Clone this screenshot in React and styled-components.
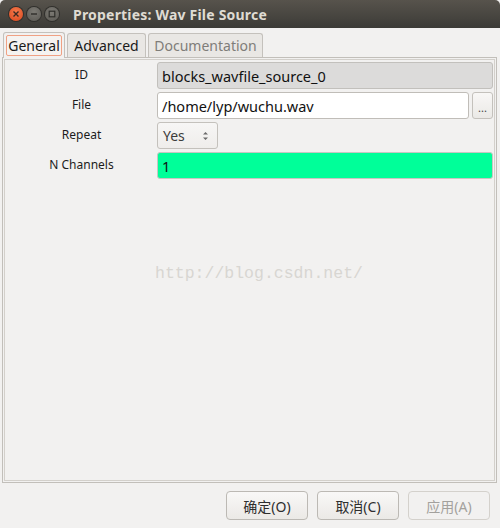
import React from "react";
import styled, { createGlobalStyle } from "styled-components";

const Global = createGlobalStyle`
  html, body { margin: 0; padding: 0; background: #f2f1f0; }
  body { font-family: "Noto Sans", "DejaVu Sans", sans-serif; }
`;

const Window = styled.div`
  width: 500px;
  height: 528px;
  background: #f2f1f0;
  display: flex;
  flex-direction: column;
  position: relative;
  overflow: hidden;
`;

const TitleBar = styled.div`
  height: 28px;
  flex: 0 0 28px;
  background: linear-gradient(#57534c, #3c3b37);
  border-radius: 5px 5px 0 0;
  display: flex;
  align-items: center;
  padding-left: 9px;
  box-sizing: border-box;
`;

const WinBtn = styled.span`
  width: 14px;
  height: 14px;
  border-radius: 50%;
  margin-right: ${(p) => p.$mr}px;
  background: ${(p) => (p.$close ? "radial-gradient(circle at 50% 35%, #f47a4c, #d9461c)" : "radial-gradient(circle at 50% 35%, #7c7a74, #5a5853)")};
  box-shadow: 0 0 0 1px #302f2c;
  display: flex;
  align-items: center;
  justify-content: center;
`;

const Title = styled.div`
  margin-left: 14px;
  color: #dfdbd2;
  font-weight: bold;
  font-size: 14px;
  letter-spacing: 0.2px;
`;

const Body = styled.div`
  flex: 1;
  display: flex;
  flex-direction: column;
  padding: 4px 3px 0 2px;
`;

const Tabs = styled.div`
  display: flex;
  align-items: flex-end;
  height: 25px;
  padding-left: 1px;
`;

const Tab = styled.div`
  box-sizing: border-box;
  height: ${(p) => (p.$active ? 26 : 24)}px;
  width: ${(p) => p.$w}px;
  margin-right: 2px;
  border: 1px solid #c4c1bc;
  border-bottom: none;
  border-radius: 3px 3px 0 0;
  background: ${(p) => (p.$active ? "#f2f1f0" : "#e9e7e4")};
  display: flex;
  align-items: center;
  justify-content: center;
  padding: 2px;
  margin-bottom: ${(p) => (p.$active ? -1 : 0)}px;
  position: relative;
  z-index: ${(p) => (p.$active ? 1 : 0)};
`;

const TabLabel = styled.span`
  font-size: 14px;
  color: ${(p) => (p.$dim ? "#7f7d79" : "#1a1a1a")};
  box-sizing: border-box;
  width: 100%;
  height: 100%;
  display: flex;
  align-items: center;
  justify-content: center;
  border: 1px solid ${(p) => (p.$focus ? "#f0a184" : "transparent")};
  border-radius: 2px;
  background: ${(p) => (p.$focus ? "#f5f3f1" : "transparent")};
`;

const Panel = styled.div`
  box-sizing: border-box;
  height: 426px;
  border: 1px solid #c2bfba;
  box-shadow: inset 0 0 0 1px #f2f1f0, inset 0 0 0 2px #d3d0cb;
  padding: 4px 3px 0 3px;
  display: flex;
  flex-direction: column;
  gap: 3px;
`;

const Row = styled.div`
  display: grid;
  grid-template-columns: 151px 1fr;
  height: 27px;
  align-items: center;
`;

const Label = styled.div`
  text-align: center;
  font-size: 12px;
  color: #1c1c1c;
  align-self: start;
  padding-top: 4px;
`;

const Field = styled.div`
  display: flex;
  gap: 3px;
  height: 27px;
`;

const Entry = styled.div`
  box-sizing: border-box;
  flex: 1;
  height: 27px;
  border: 1px solid ${(p) => p.$border || "#c0bdb8"};
  border-radius: 3px;
  background: ${(p) => p.$bg || "#ffffff"};
  font-size: 14.5px;
  color: #111;
  display: flex;
  align-items: center;
  padding-left: 4px;
`;

const SmallBtn = styled.div`
  box-sizing: border-box;
  width: 21px;
  height: 27px;
  border: 1px solid #c4c1bc;
  border-radius: 3px;
  background: linear-gradient(#f8f7f6, #ebe9e6);
  font-size: 11px;
  color: #444;
  display: flex;
  align-items: center;
  justify-content: center;
  padding-top: 3px;
`;

const Combo = styled.div`
  box-sizing: border-box;
  width: 61px;
  height: 27px;
  border: 1px solid #c4c1bc;
  border-radius: 3px;
  background: linear-gradient(#f7f6f5, #efedeb);
  display: flex;
  align-items: center;
  justify-content: space-between;
  padding: 0 8px 0 5px;
  font-size: 14px;
  color: #3c3c3c;
`;

const Arrows = styled.svg`
  width: 7px;
  height: 12px;
`;

const Watermark = styled.div`
  position: absolute;
  left: 155px;
  top: 264px;
  font-family: "Liberation Mono", "DejaVu Sans Mono", monospace;
  font-size: 16.5px;
  color: #d8d6d2;
`;

const Footer = styled.div`
  display: flex;
  justify-content: flex-end;
  gap: 9px;
  padding: 8px 7px 0 0;
`;

const Button = styled.div`
  box-sizing: border-box;
  width: 82px;
  height: 29px;
  border: 1px solid ${(p) => (p.$disabled ? "#d4d1cc" : "#bcb9b4")};
  border-radius: 4px;
  background: ${(p) => (p.$disabled ? "#f2f1f0" : "linear-gradient(#f9f8f7, #ebe9e6)")};
  display: flex;
  align-items: center;
  justify-content: center;
  font-family: "Noto Sans", "Noto Sans CJK SC", sans-serif;
  font-size: 14px;
  color: ${(p) => (p.$disabled ? "#a3a19d" : "#2e2e2e")};
`;

export default function App() {
  return (
    <Window>
      <Global />
      <TitleBar>
        <WinBtn $close $mr={4}>
          <svg width="8" height="8" viewBox="0 0 8 8">
            <path d="M1.5 1.5 L6.5 6.5 M6.5 1.5 L1.5 6.5" stroke="#3a2a22" strokeWidth="1.4" />
          </svg>
        </WinBtn>
        <WinBtn $mr={4}>
          <svg width="8" height="8" viewBox="0 0 8 8">
            <path d="M1 4 H7" stroke="#2e2d2a" strokeWidth="1.4" />
          </svg>
        </WinBtn>
        <WinBtn $mr={0}>
          <svg width="8" height="8" viewBox="0 0 8 8">
            <rect x="1.2" y="1.2" width="5.6" height="5.6" fill="none" stroke="#2e2d2a" strokeWidth="1.2" />
          </svg>
        </WinBtn>
        <Title>Properties: Wav File Source</Title>
      </TitleBar>
      <Body>
        <Tabs>
          <Tab $active $w={62}>
            <TabLabel $focus>General</TabLabel>
          </Tab>
          <Tab $w={79}>
            <TabLabel>Advanced</TabLabel>
          </Tab>
          <Tab $w={115}>
            <TabLabel $dim>Documentation</TabLabel>
          </Tab>
        </Tabs>
        <Panel>
          <Row>
            <Label>ID</Label>
            <Field>
              <Entry $bg="#dcdbda" $border="#c2c0bc">blocks_wavfile_source_0</Entry>
            </Field>
          </Row>
          <Row>
            <Label>File</Label>
            <Field>
              <Entry>/home/lyp/wuchu.wav</Entry>
              <SmallBtn>...</SmallBtn>
            </Field>
          </Row>
          <Row>
            <Label>Repeat</Label>
            <Field>
              <Combo>
                Yes
                <Arrows viewBox="0 0 7 12">
                  <path d="M1 4.5 L3.5 2 L6 4.5 Z M1 7.5 L3.5 10 L6 7.5 Z" fill="#6a6a6a" />
                </Arrows>
              </Combo>
            </Field>
          </Row>
          <Row>
            <Label>N Channels</Label>
            <Field>
              <Entry $bg="#00ff99" $border="#c8c6c2">1</Entry>
            </Field>
          </Row>
        </Panel>
        <Footer>
          <Button>确定(O)</Button>
          <Button>取消(C)</Button>
          <Button $disabled>应用(A)</Button>
        </Footer>
      </Body>
      <Watermark>http://blog.csdn.net/</Watermark>
    </Window>
  );
}
